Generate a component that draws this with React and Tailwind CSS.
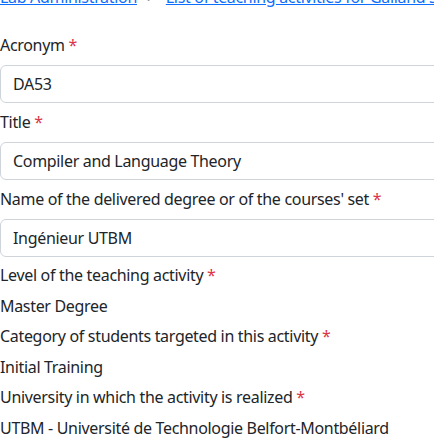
export default function App() {
  const font = { fontFamily: "'Noto Sans', 'Open Sans', sans-serif" };

  const Req = () => <span className="text-[#dc3545]"> *</span>;

  return (
    <div className="w-[434px] h-[440px] overflow-hidden bg-white text-[16px] leading-6 tracking-[-0.32px] text-[#212529]" style={font}>
      {/* Breadcrumb, scrolled partly out of view */}
      <nav className="-mt-[15px] flex items-center gap-[10px] whitespace-nowrap">
        <a href="#" className="text-[#0d6efd] underline">Lab Administration</a>
        <span className="text-[#6c757d]">&gt;</span>
        <a href="#" className="text-[#0d6efd] underline">List of teaching activities for Galland Stéphane</a>
      </nav>

      <div className="mt-[24px] w-[520px]">
        <label className="block mb-2">Acronym<Req /></label>
        <div className="mb-[7px] h-[38px] rounded-md border border-[#ced4da] px-3 py-[6px]">DA53</div>

        <label className="block mb-2">Title<Req /></label>
        <div className="mb-[7px] h-[38px] rounded-md border border-[#ced4da] px-3 py-[6px]">Compiler and Language Theory</div>

        <label className="block mb-2">Name of the delivered degree or of the courses' set<Req /></label>
        <div className="mb-[6px] h-[38px] rounded-md border border-[#ced4da] px-3 py-[6px]">Ingénieur UTBM</div>
      </div>

      <div className="flex flex-col gap-[6.6px] whitespace-nowrap">
        <div>Level of the teaching activity<Req /></div>
        <div>Master Degree</div>
        <div>Category of students targeted in this activity<Req /></div>
        <div>Initial Training</div>
        <div>University in which the activity is realized<Req /></div>
        <div>UTBM - Université de Technologie Belfort-Montbéliard</div>
      </div>
    </div>
  );
}
